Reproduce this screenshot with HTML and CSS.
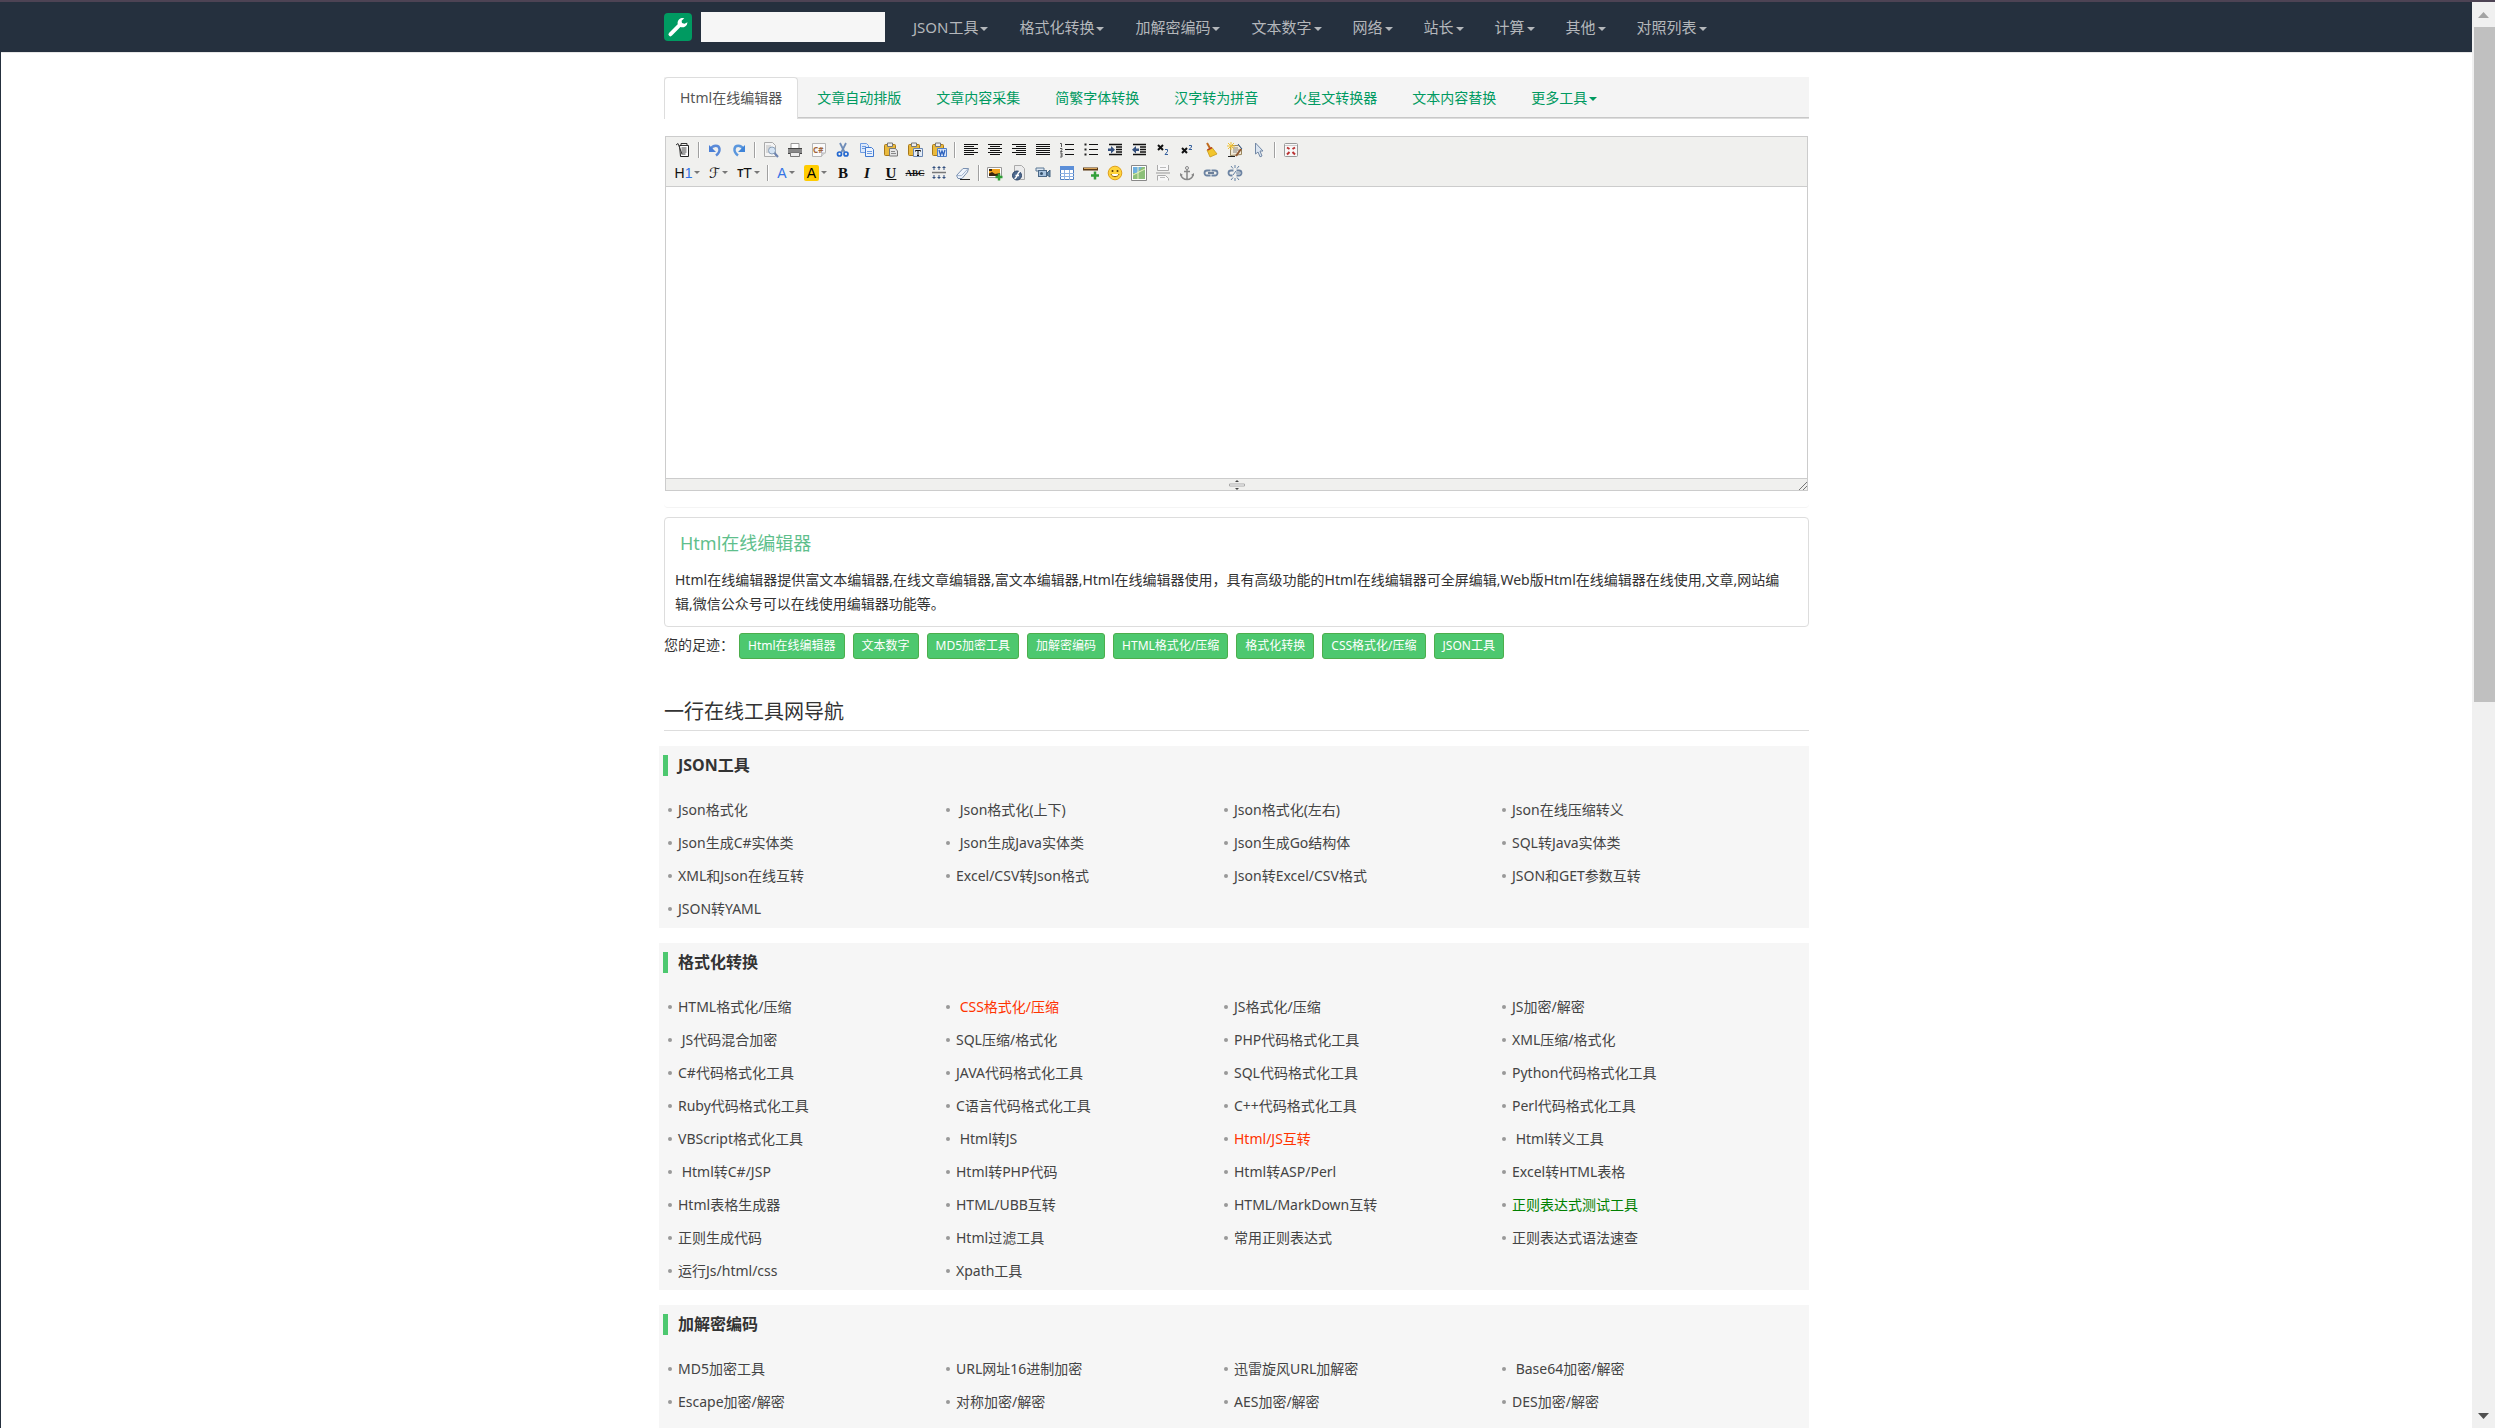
FILE: index.html
```html
<!DOCTYPE html>
<html lang="zh-CN">
<head>
<meta charset="utf-8">
<title>Html在线编辑器</title>
<link rel="stylesheet" href="styles.css">
</head>
<body>
<div class="page">
<header class="navbar">
  <div class="container nav-inner">
    <a class="logo" href="#" aria-label="首页"><svg viewBox="0 0 28 28" width="28" height="28"><rect width="28" height="28" rx="4" fill="#009a61"/><path d="M23.500 9.200a5.200 5.200 0 0 1-7.100 4.700L8 22.600a2 2 0 0 1-3-2.700l8.700-8.600A5.200 5.200 0 0 1 20.300 5.200L17.600 7.700l.4 2.400 2.500.6z" fill="#fff"/></svg></a>
    <input class="search" type="text" aria-label="搜索">
    <nav class="menu">
      <a class="drop" href="#">JSON工具</a><a class="drop" href="#">格式化转换</a><a class="drop" href="#">加解密编码</a><a class="drop" href="#">文本数字</a><a class="drop" href="#">网络</a><a class="drop" href="#">站长</a><a class="drop" href="#">计算</a><a class="drop" href="#">其他</a><a class="drop" href="#">对照列表</a>
    </nav>
  </div>
</header>
<main class="container">
  <nav class="tabs">
    <a class="active" href="#">Html在线编辑器</a><a href="#">文章自动排版</a><a href="#">文章内容采集</a><a href="#">简繁字体转换</a><a href="#">汉字转为拼音</a><a href="#">火星文转换器</a><a href="#">文本内容替换</a><a class="drop" href="#">更多工具</a>
  </nav>
  <div class="tab-body">
  <div class="editor">
    <div class="toolbar">
      <div class="tool-row">
        <button aria-label="HTML代码"><svg viewBox="0 0 16 16"><path d="M4.500 3.500h9v11h-8z" fill="#fff" stroke="#222"/><path d="M6 1.500h6v2H6zM1 3l2-1.500L7 12" fill="none" stroke="#333"/><path d="M6.500 6h5M6.500 8h5M6.500 10h5M6.500 12h4" stroke="#444"/></svg></button>
        <i class="sep"></i>
        <button aria-label="后退"><svg viewBox="0 0 16 16"><path d="M3.500 7C6 2.500 12 2.500 12.500 7c.3 3-1.500 5-3.500 6.500" fill="none" stroke="#5a8ad8" stroke-width="2.500"/><path d="M2 3v7h7z" fill="#4a7fd6"/></svg></button>
        <button aria-label="前进"><svg viewBox="0 0 16 16"><path d="M12.500 7C10 2.500 4 2.500 3.500 7c-.3 3 1.500 5 3.500 6.500" fill="none" stroke="#5a96dd" stroke-width="2.500"/><path d="M14 3v7H7z" fill="#3f84d8"/></svg></button>
        <i class="sep"></i>
        <button aria-label="预览"><svg viewBox="0 0 16 16"><path d="M1.500.5h8l3 3v11h-11z" fill="#f4f4f4" stroke="#aaa"/><path d="M3 4h5M3 6h4M3 8h3M3 10h3" stroke="#bbb"/><circle cx="9" cy="8.500" r="3.500" fill="#d5e4f4" stroke="#8ba0b8"/><path d="m11.500 11 3.500 4" stroke="#6d83b0" stroke-width="2"/></svg></button>
        <button aria-label="打印"><svg viewBox="0 0 16 16"><path d="M4 1.500h8v5H4z" fill="#fff" stroke="#999"/><path d="M1 6h14v6H1z" fill="#888"/><path d="M1 6.500h14M1 11.500h14" stroke="#444"/><path d="M3.500 10.500h9v4h-9z" fill="#eee" stroke="#777"/></svg></button>
        <button aria-label="插入程序代码"><svg viewBox="0 0 16 16"><path d="M1.500 1.500h13v9l-4 4h-9z" fill="#fafafa" stroke="#b5b5b5"/><path d="m10.500 14.500.5-3.500h3.500" fill="#ddd" stroke="#b5b5b5"/><text x="2" y="10.500" font-size="8" font-weight="700" fill="#a0653a">C#</text></svg></button>
        <button aria-label="剪切"><svg viewBox="0 0 16 16"><path d="m5 1 4.500 9M11 1 6.500 10" stroke="#6f8db8" stroke-width="1.800"/><circle cx="4.500" cy="12" r="2" fill="none" stroke="#2468d0" stroke-width="1.700"/><circle cx="11" cy="12" r="2" fill="none" stroke="#2468d0" stroke-width="1.700"/></svg></button>
        <button aria-label="复制"><svg viewBox="0 0 16 16"><path d="M1.500 1.500h6l2 2v7h-8z" fill="#dce9fb" stroke="#6e9be0"/><path d="M6.500 5.500h6l2 2v7h-8z" fill="#eaf2fd" stroke="#3f78d0"/><path d="M3 4.500h4M3 6.500h3M8 9.500h5M8 11.500h5" stroke="#6e9be0"/></svg></button>
        <button aria-label="粘贴"><svg viewBox="0 0 16 16"><rect x="1.500" y="2.500" width="11" height="11" rx="1" fill="#e9b93c" stroke="#a87818"/><path d="M4.500 1h5v3.500h-5z" fill="#eee" stroke="#777"/><path d="M6.500 6.500h6l2 2.500v5h-8z" fill="#e5e5e5" stroke="#777"/><path d="M8 9.500h4M8 11.500h5" stroke="#888"/></svg></button>
        <button aria-label="粘贴为无格式文本"><svg viewBox="0 0 16 16"><rect x="1.500" y="2.500" width="11" height="11" rx="1" fill="#e9b93c" stroke="#a87818"/><path d="M4.500 1h5v3.500h-5z" fill="#eee" stroke="#777"/><path d="M6.500 6.500h9v8h-9z" fill="#e4edf8" stroke="#6a86b0"/><path d="M8.500 9.500v-1h5v1M11 8.500v5M10 13.500h2" stroke="#111" fill="none"/></svg></button>
        <button aria-label="从Word粘贴"><svg viewBox="0 0 16 16"><rect x="1.500" y="2.500" width="11" height="11" rx="1" fill="#e9b93c" stroke="#a87818"/><path d="M4.500 1h5v3.500h-5z" fill="#eee" stroke="#777"/><path d="M6.500 6.500h9v8h-9z" fill="#d6e4fa" stroke="#4f7fc8"/><path d="m8 8 1.500 5L11 9l1.500 4L14 8" stroke="#2d62bd" stroke-width="1.300" fill="none"/></svg></button>
        <i class="sep"></i>
        <button aria-label="左对齐"><svg viewBox="0 0 16 16"><path d="M1 2.500h14M1 4.500h10M1 6.500h14M1 8.500h10M1 10.500h14M1 12.500h10" stroke="#111"/></svg></button>
        <button aria-label="居中"><svg viewBox="0 0 16 16"><path d="M1 2.500h14M3 4.500h10M1 6.500h14M3 8.500h10M1 10.500h14M3 12.500h10" stroke="#111"/></svg></button>
        <button aria-label="右对齐"><svg viewBox="0 0 16 16"><path d="M1 2.500h14M5 4.500h10M1 6.500h14M5 8.500h10M1 10.500h14M5 12.500h10" stroke="#111"/></svg></button>
        <button aria-label="两端对齐"><svg viewBox="0 0 16 16"><path d="M1 2.500h14M1 4.500h14M1 6.500h14M1 8.500h14M1 10.500h14M1 12.500h14" stroke="#111"/></svg></button>
        <button aria-label="编号"><svg viewBox="0 0 16 16"><path d="M6 2.500h9M6 7.500h9M6 12.500h9" stroke="#111"/><path d="M1 1.500h1.500V5M1 6.500h2v1L1.500 9.500H3.500M1 11h2v4H1M1.500 13H3" fill="none" stroke="#333" stroke-width=".8"/></svg></button>
        <button aria-label="项目符号"><svg viewBox="0 0 16 16"><path d="M6 2.500h9M6 7.500h9M6 12.500h9" stroke="#111"/><path d="M1.500 1.500h2v2h-2zM1.500 6.500h2v2h-2zM1.500 11.500h2v2h-2z" fill="#222"/></svg></button>
        <button aria-label="增加缩进"><svg viewBox="0 0 16 16"><path d="M2 2.500h13M9 5h6M9 7.500h6M9 10h6M2 12.500h13" stroke="#111" stroke-width="1.300"/><path d="M1 6.500h3V4l4 3.700L4 11.500V9H1z" fill="#34507e"/></svg></button>
        <button aria-label="减少缩进"><svg viewBox="0 0 16 16"><path d="M2 2.500h13M9 5h6M9 7.500h6M9 10h6M2 12.500h13" stroke="#111" stroke-width="1.300"/><path d="M8 6.500H5V4L1 7.700l4 3.800V9h3z" fill="#34507e"/></svg></button>
        <button aria-label="下标"><svg viewBox="0 0 16 16"><path d="m3 3 5 5M8 3 3 8" stroke="#111" stroke-width="2"/><path d="M10 7.500h2.500v2L10 12.500h3" fill="none" stroke="#345f9c"/></svg></button>
        <button aria-label="上标"><svg viewBox="0 0 16 16"><path d="m3 6 5 5M8 6 3 11" stroke="#111" stroke-width="2"/><path d="M10 3.500h2.500v1.500L10 7.500h3" fill="none" stroke="#345f9c"/></svg></button>
        <button aria-label="一键排版"><svg viewBox="0 0 16 16"><path d="m4 1 4 7" stroke="#c06a1c" stroke-width="2"/><path d="m4 8 5-2.500 5 6.500-7 3z" fill="#f2c52c" stroke="#c99818" stroke-width=".8"/><path d="m4.500 8 4.500-2.300" stroke="#b33c24" stroke-width="1.500"/></svg></button>
        <button aria-label="快速排版"><svg viewBox="0 0 16 16"><path d="M3.500 3.500h8l3 3v6l-11 1z" fill="#f3ead8" stroke="#998760"/><path d="M6 6h5M6 8h6M6 10h4" stroke="#888"/><path d="M4 0v8M0 4h8M1 1l6 6M7 1 1 7" stroke="#f1c232"/><path d="m14 7-5 7" stroke="#8f5832" stroke-width="2"/><path d="M1 14.500h7" stroke="#222"/><path d="m11 2 4 5" stroke="#2e5890"/></svg></button>
        <button aria-label="全选"><svg viewBox="0 0 16 16"><path d="m4.500 1 7.500 8H9l2 5-2 .8L7 10l-2.500 2z" fill="#dbe5f1" stroke="#7288a5"/></svg></button>
        <i class="sep"></i>
        <button aria-label="全屏显示"><svg viewBox="0 0 16 16"><rect x="1.500" y="1.500" width="13" height="13" rx="1" fill="#f8f8f8" stroke="#999"/><path d="M2 3.500h12" stroke="#ccc"/><path d="M4 5.500 6.500 7M12 5.500 9.500 7M4 12.500 6.500 10M12 12.500 9.500 10" stroke="#b33" stroke-width="2"/></svg></button>
      </div>
      <div class="tool-row">
        <button class="w33 pick">H<b class="blue">1</b></button>
        <button class="w29 pick script">ℱ</button>
        <button class="w31 pick"><small>T</small>T</button>
        <i class="sep"></i>
        <button class="w28 pick blue">A</button>
        <button class="w31 pick"><mark>A</mark></button>
        <button class="serif">B</button>
        <button class="serif italic">I</button>
        <button class="serif under">U</button>
        <button class="serif strike">ABC</button>
        <button aria-label="行距"><svg viewBox="0 0 16 16"><path d="M1 7.500h14" stroke="#777" stroke-width="1.500"/><path d="M3 1v4M8 1v4M13 1v4M3 10v4M8 10v4M13 10v4M1.500 2.500h3M6.500 2.500h3M11.500 2.500h3M1.500 12.500h3M6.500 12.500h3M11.500 12.500h3" stroke="#34507e"/></svg></button>
        <button aria-label="删除格式"><svg viewBox="0 0 16 16"><path d="M1.500 10.500 8 3.500h5.500l-1 3.500L7 13.500H3z" fill="#eef4fc" stroke="#7a90b0"/><path d="m1.500 10.500 5 .2 6.500-7" fill="none" stroke="#9fb2cc"/><path d="M5 14.500h10" stroke="#222"/></svg></button>
        <i class="sep"></i>
        <button aria-label="图片"><svg viewBox="0 0 16 16"><path d="M.5 2.500h14v10H.5z" fill="#fff" stroke="#999"/><path d="M2 4h11v7H2z" fill="#f0a21c"/><path d="M2 8.500 5 7l3 2 5-1v3H2zM2 4h3v2H2z" fill="#3a2510"/><path d="M12 8.500v7M8.500 12h7" stroke="#2f9e35" stroke-width="2.500"/></svg></button>
        <button aria-label="Flash"><svg viewBox="0 0 16 16"><path d="M3.500.5h7l3 3v11h-10z" fill="#ececec" stroke="#aaa"/><circle cx="6" cy="10.500" r="4.500" fill="#4d698e" stroke="#2d4568"/><path d="M9 6.500C6 7 6.500 13 3.500 14M4.500 10.500h3.500" stroke="#fff" stroke-width="1.400" fill="none"/></svg></button>
        <button aria-label="视音频"><svg viewBox="0 0 16 16"><path d="M1 3h8v3H1z" fill="#dfe9f3" stroke="#5c7894"/><rect x="3.500" y="5.500" width="8" height="6" fill="#a8c3de" stroke="#4a6785"/><path d="m12 8 3-3v7l-3-2z" fill="#6589a8" stroke="#456380"/><circle cx="6.500" cy="8.500" r="1.500" fill="#36536e"/></svg></button>
        <button aria-label="表格"><svg viewBox="0 0 16 16"><path d="M1.500 1.500h13v13h-13z" fill="#fff" stroke="#4f7fc2"/><path d="M1 1h14v4H1z" fill="#5c8fd8"/><path d="M1 8.500h14M1 11.500h14M5.500 5v10M10.500 5v10" stroke="#8cb0e2"/></svg></button>
        <button aria-label="横线"><svg viewBox="0 0 16 16"><path d="M0 4h15" stroke="#5a3913" stroke-width="3"/><path d="M1 3.500h13" stroke="#d9a55a"/><path d="M12 6.500v8M8 10.500h8" stroke="#32a03a" stroke-width="2.500"/></svg></button>
        <button aria-label="表情"><svg viewBox="0 0 16 16"><circle cx="8" cy="8" r="6.800" fill="#ffd43c" stroke="#e0a01c"/><circle cx="5.500" cy="6" r="1" fill="#5c3a00"/><circle cx="10.500" cy="6" r="1" fill="#5c3a00"/><path d="M4 9c1 3.500 7 3.500 8 0" fill="#fff" stroke="#8a5b00"/></svg></button>
        <button aria-label="地图"><svg viewBox="0 0 16 16"><path d="M.5.5h15v15H.5z" fill="#fff" stroke="#888"/><path d="M2 2h12v12H2z" fill="#8cc079"/><path d="M2 2h9L6 8H2z" fill="#6fb0e0"/><path d="M2 10 14 4M7 2v12" stroke="#e6f0c0"/></svg></button>
        <button aria-label="分页符"><svg viewBox="0 0 16 16"><path d="M2.500 0v5.500h11V0M2.500 15.500v-5h8l3 3v2" fill="#f8f8f8" stroke="#aaa"/><path d="M1 8h14" stroke="#999"/><path d="M5 2.500h6M5 12.500h5" stroke="#bbb"/></svg></button>
        <button aria-label="锚点"><svg viewBox="0 0 16 16"><circle cx="8" cy="3" r="1.500" fill="none" stroke="#888"/><path d="M8 4.500v10M5 6.500h6M2 9.500c0 3 3 5 6 5s6-2 6-5" fill="none" stroke="#888" stroke-width="1.500"/><path d="M1 11V8l3 2zM15 11V8l-3 2z" fill="#888"/></svg></button>
        <button aria-label="超级链接"><svg viewBox="0 0 16 16"><path d="M7.500 5.500H4a2.500 2.500 0 0 0 0 5h3.500M8.500 5.500H12a2.500 2.500 0 0 1 0 5H8.500" fill="none" stroke="#6c83a2" stroke-width="1.800"/><path d="M5 8h6" stroke="#405a7c" stroke-width="1.500"/></svg></button>
        <button aria-label="取消超级链接"><svg viewBox="0 0 16 16"><path d="M6.500 5.500H4a2.500 2.500 0 0 0 0 5h1.500M9.500 5.500H12a2.500 2.500 0 0 1 0 5H9.500" fill="none" stroke="#6c83a2" stroke-width="1.800"/><path d="m9 6-3 4M4 1l2 2.500M8 0v3M12 1l-2 2.500M4 15l2-2.500M8 16v-3M12 15l-2-2.500M9 8h4" stroke="#6480a2"/></svg></button>
      </div>
    </div>
    <textarea class="edit-area" aria-label="编辑区"></textarea>
    <div class="status">
      <svg class="grip" viewBox="0 0 16 10" width="16" height="10"><path d="M8 0 6 2h4zM8 10 6 8h4z" fill="#444"/><path d="M.5 4h15v2H.5z" fill="#fff" stroke="#aaa"/></svg>
      <svg class="corner" viewBox="0 0 8 8" width="8" height="8"><path d="M0 8 8 0M4 8l4-4" stroke="#777"/></svg>
    </div>
  </div>
  </div>
  <section class="intro">
    <h1>Html在线编辑器</h1>
    <p>Html在线编辑器提供富文本编辑器,在线文章编辑器,富文本编辑器,Html在线编辑器使用，具有高级功能的Html在线编辑器可全屏编辑,Web版Html在线编辑器在线使用,文章,网站编辑,微信公众号可以在线使用编辑器功能等。</p>
  </section>
  <div class="history">
    <span>您的足迹：</span>
    <a href="#">Html在线编辑器</a><a href="#">文本数字</a><a href="#">MD5加密工具</a><a href="#">加解密编码</a><a href="#">HTML格式化/压缩</a><a href="#">格式化转换</a><a href="#">CSS格式化/压缩</a><a href="#">JSON工具</a>
  </div>
  <h2 class="nav-title">一行在线工具网导航</h2>
  <section class="group">
    <h3>JSON工具</h3>
    <ul>
      <li><a href="#">Json格式化</a></li><li><a href="#">&nbsp;Json格式化(上下)</a></li><li><a href="#">Json格式化(左右)</a></li><li><a href="#">Json在线压缩转义</a></li>
      <li><a href="#">Json生成C#实体类</a></li><li><a href="#">&nbsp;Json生成Java实体类</a></li><li><a href="#">Json生成Go结构体</a></li><li><a href="#">SQL转Java实体类</a></li>
      <li><a href="#">XML和Json在线互转</a></li><li><a href="#">Excel/CSV转Json格式</a></li><li><a href="#">Json转Excel/CSV格式</a></li><li><a href="#">JSON和GET参数互转</a></li>
      <li><a href="#">JSON转YAML</a></li>
    </ul>
  </section>
  <section class="group">
    <h3>格式化转换</h3>
    <ul>
      <li><a href="#">HTML格式化/压缩</a></li><li><a class="red" href="#">&nbsp;CSS格式化/压缩</a></li><li><a href="#">JS格式化/压缩</a></li><li><a href="#">JS加密/解密</a></li>
      <li><a href="#">&nbsp;JS代码混合加密</a></li><li><a href="#">SQL压缩/格式化</a></li><li><a href="#">PHP代码格式化工具</a></li><li><a href="#">XML压缩/格式化</a></li>
      <li><a href="#">C#代码格式化工具</a></li><li><a href="#">JAVA代码格式化工具</a></li><li><a href="#">SQL代码格式化工具</a></li><li><a href="#">Python代码格式化工具</a></li>
      <li><a href="#">Ruby代码格式化工具</a></li><li><a href="#">C语言代码格式化工具</a></li><li><a href="#">C++代码格式化工具</a></li><li><a href="#">Perl代码格式化工具</a></li>
      <li><a href="#">VBScript格式化工具</a></li><li><a href="#">&nbsp;Html转JS</a></li><li><a class="red" href="#">Html/JS互转</a></li><li><a href="#">&nbsp;Html转义工具</a></li>
      <li><a href="#">&nbsp;Html转C#/JSP</a></li><li><a href="#">Html转PHP代码</a></li><li><a href="#">Html转ASP/Perl</a></li><li><a href="#">Excel转HTML表格</a></li>
      <li><a href="#">Html表格生成器</a></li><li><a href="#">HTML/UBB互转</a></li><li><a href="#">HTML/MarkDown互转</a></li><li><a class="green" href="#">正则表达式测试工具</a></li>
      <li><a href="#">正则生成代码</a></li><li><a href="#">Html过滤工具</a></li><li><a href="#">常用正则表达式</a></li><li><a href="#">正则表达式语法速查</a></li>
      <li><a href="#">运行Js/html/css</a></li><li><a href="#">Xpath工具</a></li>
    </ul>
  </section>
  <section class="group last">
    <h3>加解密编码</h3>
    <ul>
      <li><a href="#">MD5加密工具</a></li><li><a href="#">URL网址16进制加密</a></li><li><a href="#">迅雷旋风URL加解密</a></li><li><a href="#">&nbsp;Base64加密/解密</a></li>
      <li><a href="#">Escape加密/解密</a></li><li><a href="#">对称加密/解密</a></li><li><a href="#">AES加密/解密</a></li><li><a href="#">DES加密/解密</a></li>
    </ul>
  </section>
</main>
</div>
<div class="scrollbar">
  <svg class="arrow" viewBox="0 0 11 6" width="11" height="6"><path d="M0 6 5.500 0 11 6z" fill="#a3a3a3"/></svg>
  <div class="track"><div class="thumb"></div></div>
  <svg class="arrow" viewBox="0 0 11 6" width="11" height="6"><path d="M0 0h11L5.500 6z" fill="#505050"/></svg>
</div>
</body>
</html>
```
FILE: styles.css
```css
* { box-sizing: border-box; }
body {
  margin: 0;
  height: 100vh;
  overflow: hidden;
  display: flex;
  border-top: 2px solid #4d4354;
  font: 14px/20px "Noto Sans", "Noto Sans CJK SC", sans-serif;
  color: #333;
  background: #fff;
}
a { text-decoration: none; }
button { font-family: inherit; }
.page {
  flex: 1;
  display: flex;
  flex-direction: column;
  min-width: 0;
  border-left: 1px solid #25303e;
}
.container { width: 100%; max-width: 1145px; margin: 0 auto; }
.drop::after {
  content: "";
  display: inline-block;
  margin-left: 2px;
  vertical-align: middle;
  border-top: 4px solid;
  border-left: 4px solid transparent;
  border-right: 4px solid transparent;
}

/* Top bar */
.navbar { background: #25303e; border-bottom: 1px solid #e7e7e7; flex: none; }
.nav-inner { display: flex; align-items: center; height: 50px; }
.logo { display: flex; margin-right: 9px; }
.search {
  width: 184px;
  height: 30px;
  border: 0;
  padding: 0 8px;
  background: #f6f6f6;
}
.menu { display: flex; gap: 1px; margin-left: 13px; }
.menu a { padding: 15px; font-size: 15px; color: #b4b7bb; white-space: nowrap; }

main.container { flex: 1; display: flex; flex-direction: column; padding-top: 24px; }

/* Tabs */
.tabs {
  display: flex;
  gap: 3px;
  flex: none;
  height: 42px;
  background: #f4f4f4;
  border-bottom: 1px solid #ddd;
  box-shadow: inset 0 -1px #c8c8c8;
}
.tabs a {
  height: 42px;
  padding: 10px 15px;
  border: 1px solid transparent;
  border-radius: 4px 4px 0 0;
  color: #009a61;
  white-space: nowrap;
}
.tabs .active { background: #fff; border-color: #ddd; border-bottom: 0; color: #555; }

/* Editor */
.tab-body {
  flex: none;
  padding: 17px 1px 16px;
  border-bottom: 1px solid #f4f4f4;
  border-radius: 0 0 4px 4px;
}
.editor { border: 1px solid #ccc; }
.toolbar { padding: 1px 5px; height: 50px; background: #f0f0ee; border-bottom: 1px solid #ccc; }
.tool-row { display: flex; height: 23px; align-items: center; }
.tool-row button {
  display: flex;
  align-items: center;
  justify-content: center;
  width: 24px;
  height: 22px;
  padding: 0;
  border: 0;
  background: none;
  color: #111;
}
.tool-row svg { width: 16px; height: 16px; }
.sep { width: 2px; height: 16px; margin: 0 3px; background: #a0a0a0; border-right: 1px solid #fff; }
.tool-row .pick { font: 14px/16px "Liberation Sans", sans-serif; }
.pick::after {
  content: "";
  margin-left: 2px;
  border-top: 3px solid #777;
  border-left: 3px solid transparent;
  border-right: 3px solid transparent;
}
.tool-row .w33 { width: 33px; }
.tool-row .w31 { width: 31px; }
.tool-row .w29 { width: 29px; }
.tool-row .w28 { width: 28px; }
.pick small { font-size: 10px; font-weight: 700; padding-top: 3px; }
.pick mark { width: 15px; background: #fc0; border-radius: 2px; }
.tool-row .blue { color: #3273e6; font-weight: 400; }
.tool-row .script { font-family: "DejaVu Serif", "DejaVu Sans", serif; }
.tool-row .serif { font: 700 15px/18px "Liberation Serif", serif; }
.tool-row .italic { font-style: italic; }
.tool-row .under { text-decoration: underline; }
.tool-row .strike { font-size: 9px; text-decoration: line-through; }
.edit-area { display: block; width: 100%; height: 291px; border: 0; resize: none; outline: 0; }
.status {
  display: flex;
  align-items: center;
  height: 12px;
  background: #f0f0ee;
  border-top: 1px solid #ccc;
}
.grip { margin: 0 auto; }
.corner { align-self: flex-end; margin-left: -8px; }

/* Description */
.intro {
  flex: none;
  margin-top: 9px;
  padding: 14px 20px 10px 10px;
  border: 1px solid #ddd;
  border-radius: 4px;
}
.intro h1 { margin: 0 0 14px 5px; font-size: 18px; line-height: 22px; font-weight: 400; color: #5fbf8d; }
.intro p { margin: 0; line-height: 24px; }

.history { display: flex; flex: none; gap: 8px; padding-top: 6px; }
.history span { width: 67px; line-height: 24px; white-space: nowrap; }
.history a {
  padding: 2px 8px;
  border: 1px solid #4cae4c;
  border-radius: 3px;
  background: #4dc86f;
  color: #fff;
  font-size: 12px;
  white-space: nowrap;
}

/* Tool directory */
.nav-title {
  flex: none;
  margin: 39px 0 15px;
  padding-bottom: 4px;
  border-bottom: 1px solid #ddd;
  font-size: 20px;
  line-height: 28px;
  font-weight: 400;
}
.group { flex: none; margin: 0 0 15px -5px; padding: 9px 33px 3px 4px; background: #f6f6f6; }
.group.last { flex: 1; margin-bottom: 0; }
.group h3 {
  margin: 0 0 17px;
  padding-left: 10px;
  border-left: 5px solid #4dc86f;
  font-size: 16px;
  line-height: 21px;
}
.group ul {
  display: grid;
  grid-template-columns: repeat(4, 1fr);
  margin: 0;
  padding: 0 0 0 1px;
  list-style: none;
}
.group li { display: flex; align-items: center; gap: 6px; padding-left: 4px; line-height: 33px; }
.group li::before { content: ""; width: 4px; height: 4px; border-radius: 50%; background: #999; }
.group li a { color: #444; }
.group li .red { color: #ff3300; }
.group li .green { color: #008000; }

/* Scroll bar */
.scrollbar {
  display: flex;
  flex-direction: column;
  align-items: center;
  width: 23px;
  padding: 10px 0 9px;
  background: #f0f0f0;
}
.arrow { flex: none; }
.track { flex: 1; width: 100%; margin: 9px 0; padding-left: 2px; }
.thumb { height: 49%; background: #c0c0c0; }
```
